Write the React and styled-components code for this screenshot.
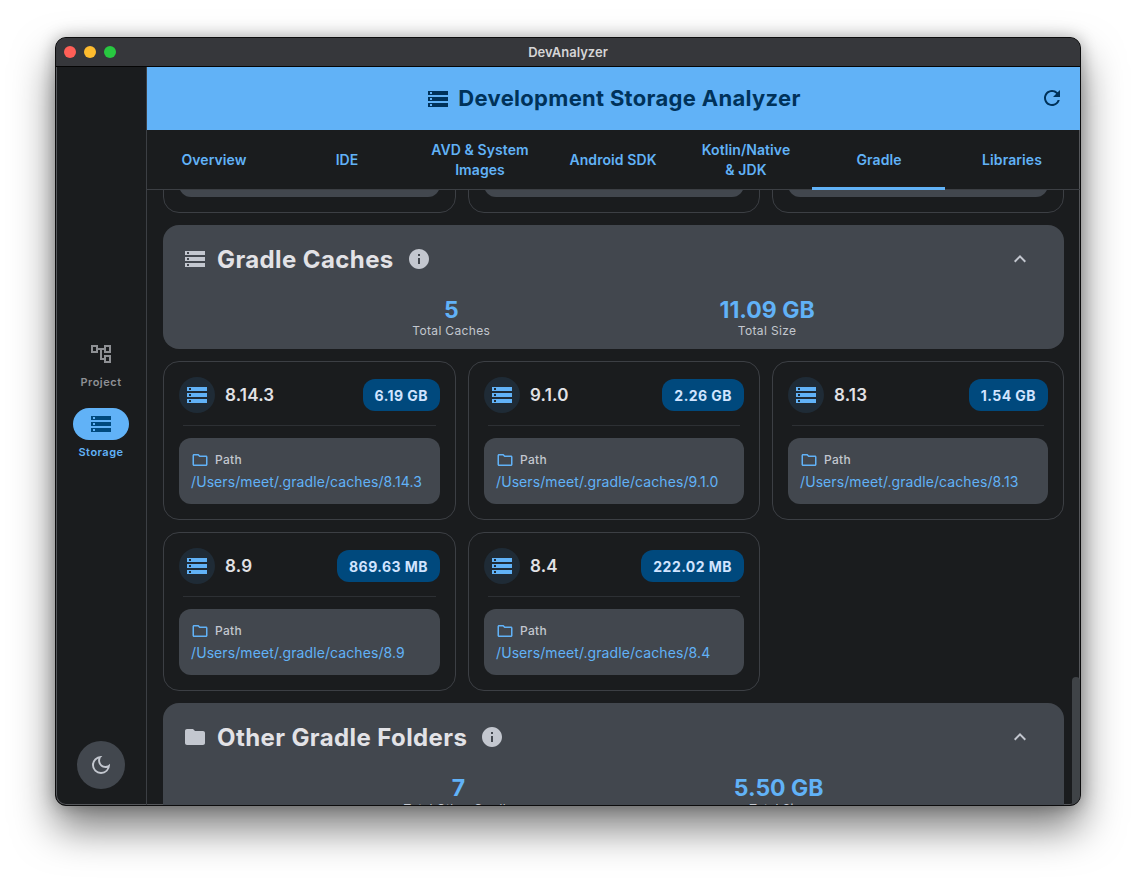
import React from 'react';
import styled, { createGlobalStyle } from 'styled-components';
import { MdStorage, MdFolder, MdInfo, MdExpandLess, MdRefresh, MdOutlineFolder, MdOutlineDarkMode, MdOutlineAccountTree } from 'react-icons/md';

const Global = createGlobalStyle`
  html, body { margin: 0; padding: 0; background: #fff; height: 880px; overflow: hidden; }
  * { box-sizing: border-box; }
  body { font-family: Inter, "Liberation Sans", sans-serif; }
`;

const BLUE = '#61b2f7';
const SURFACE = '#1a1c1e';
const VARIANT = '#42474e';
const LINE = '#3c3f44';

const Window = styled.div`
  margin: 37px 55px 0;
  width: 1026px;
  height: 769px;
  border-radius: 11px;
  background: ${SURFACE};
  border: 1px solid #0c0c0d;
  box-shadow: inset 0 0 0 1px #55575b, 0 22px 42px rgba(0, 0, 0, 0.52), 0 0 16px rgba(0, 0, 0, 0.28);
  display: flex;
  flex-direction: column;
  overflow: hidden;
`;
const TitleBar = styled.div`
  height: 29px;
  flex: none;
  background: #36373b;
  border-bottom: 1px solid #050505;
  display: flex;
  align-items: center;
  justify-content: center;
  position: relative;
  color: #d5d5d6;
  font-size: 13px;
  font-weight: 600;
`;
const Lights = styled.div`
  position: absolute;
  left: 8px;
  top: 8px;
  display: flex;
  gap: 8px;
`;
const Light = styled.span`
  width: 12px;
  height: 12px;
  border-radius: 50%;
  background: ${(p) => p.$c};
`;
const Body = styled.div`
  flex: 1;
  min-height: 0;
  display: flex;
`;
const Rail = styled.nav`
  width: 91px;
  flex: none;
  border-right: 1px solid ${LINE};
  display: flex;
  flex-direction: column;
  align-items: center;
  padding: 0 0 16px;
`;
const RailItems = styled.div`
  flex: 1;
  display: flex;
  flex-direction: column;
  align-items: center;
  justify-content: center;
  gap: 18px;
  padding-bottom: 10px;
`;
const RailItem = styled.div`
  display: flex;
  flex-direction: column;
  align-items: center;
  gap: 4px;
  font-size: 11px;
  font-weight: 600;
  letter-spacing: 0.5px;
  line-height: 16px;
  color: ${(p) => (p.$active ? BLUE : '#8e9094')};
`;
const Pill = styled.div`
  width: 56px;
  height: 32px;
  border-radius: 16px;
  display: flex;
  align-items: center;
  justify-content: center;
  font-size: 24px;
  background: ${(p) => (p.$active ? BLUE : 'transparent')};
  color: ${(p) => (p.$active ? '#00497d' : '#8e9094')};
`;
const ThemeButton = styled.div`
  width: 48px;
  height: 48px;
  border-radius: 50%;
  background: ${VARIANT};
  color: #c3c7cf;
  font-size: 24px;
  display: flex;
  align-items: center;
  justify-content: center;
`;
const Main = styled.main`
  flex: 1;
  min-width: 0;
  display: flex;
  flex-direction: column;
`;
const Header = styled.header`
  height: 63px;
  flex: none;
  background: ${BLUE};
  color: #00325a;
  display: flex;
  align-items: center;
  justify-content: center;
  gap: 8px;
  position: relative;
`;
const HeaderTitle = styled.h1`
  margin: 0 0 2px;
  font-size: 22px;
  font-weight: 700;
  letter-spacing: 0.3px;
`;
const HeaderIcon = styled.span`
  font-size: 24px;
  display: flex;
`;
const RefreshButton = styled.span`
  position: absolute;
  right: 16px;
  top: 19px;
  font-size: 24px;
  display: flex;
`;
const Tabs = styled.div`
  height: 60px;
  flex: none;
  display: grid;
  grid-template-columns: repeat(7, 133px);
  border-bottom: 1px solid ${LINE};
`;
const Tab = styled.div`
  display: flex;
  align-items: center;
  justify-content: center;
  text-align: center;
  color: ${BLUE};
  font-size: 14px;
  font-weight: 600;
  line-height: 20px;
  letter-spacing: 0.08px;
  padding: 3px 0 0 1px;
  border-bottom: 3px solid ${(p) => (p.$active ? BLUE : 'transparent')};
  margin-bottom: -1px;
`;
const Scroll = styled.div`
  flex: 1;
  min-height: 0;
  overflow: hidden;
  position: relative;
`;
const Content = styled.div`
  margin-top: -136px;
  padding: 0 16px;
  display: flex;
  flex-direction: column;
  gap: 12px;
`;
const Thumb = styled.div`
  position: absolute;
  right: 0;
  bottom: 0;
  width: 8px;
  height: 128px;
  border-radius: 4px 4px 0 0;
  background: #3f4347;
`;
const Grid = styled.div`
  display: grid;
  grid-template-columns: 293px 292px 292px;
  gap: 12px;
`;
const Card = styled.div`
  border: 1px solid ${LINE};
  border-radius: 16px;
  padding: 15px;
  height: 159px;
  display: flex;
  flex-direction: column;
`;
const CardTop = styled.div`
  display: flex;
  align-items: center;
  height: 36px;
`;
const Round = styled.div`
  width: 36px;
  height: 36px;
  border-radius: 50%;
  background: #1f2b36;
  color: ${BLUE};
  font-size: 24px;
  display: flex;
  align-items: center;
  justify-content: center;
`;
const Version = styled.div`
  margin-left: 10px;
  flex: 1;
  color: #e2e2e6;
  font-size: 17px;
  font-weight: 600;
  letter-spacing: 0.2px;
`;
const Badge = styled.div`
  height: 32px;
  padding: 0 12px;
  border-radius: 12px;
  background: #00497d;
  color: #d1e4ff;
  font-size: 14px;
  font-weight: 700;
  letter-spacing: 0.45px;
  display: flex;
  align-items: center;
`;
const Divider = styled.div`
  height: 1px;
  background: #2d3034;
  margin: 12px 4px;
`;
const PathBox = styled.div`
  background: ${VARIANT};
  border-radius: 12px;
  height: 66px;
  padding: 12px;
  display: flex;
  flex-direction: column;
  gap: 3px;
`;
const PathLabel = styled.div`
  display: flex;
  align-items: center;
  gap: 6px;
  height: 20px;
  color: #c3c7cf;
  font-size: 12px;
  font-weight: 500;
  letter-spacing: 0.3px;
`;
const PathIcon = styled.span`
  font-size: 18px;
  display: flex;
  color: ${BLUE};
`;
const PathValue = styled.div`
  color: ${BLUE};
  font-size: 14px;
  line-height: 20px;
  white-space: nowrap;
  letter-spacing: 0.09px;
`;
const Section = styled.section`
  background: ${VARIANT};
  border-radius: 16px;
  height: 124px;
  padding: 10px 20px 0;
  flex: none;
`;
const SectionTop = styled.div`
  display: flex;
  align-items: center;
  height: 48px;
`;
const SectionIcon = styled.span`
  font-size: 24px;
  display: flex;
  color: #c3c7cf;
`;
const SectionTitle = styled.h2`
  margin: 0 0 0 10px;
  color: #e2e2e6;
  font-size: 24px;
  font-weight: 700;
  letter-spacing: 0.4px;
`;
const InfoIcon = styled.span`
  margin-left: 13px;
  font-size: 24px;
  display: flex;
  color: #c3c7cf;
`;
const Collapse = styled.span`
  margin-left: auto;
  width: 48px;
  height: 48px;
  font-size: 24px;
  color: #c3c7cf;
  display: flex;
  align-items: center;
  justify-content: center;
`;
const Stats = styled.div`
  display: flex;
  justify-content: space-evenly;
  margin-top: 13px;
`;
const Stat = styled.div`
  display: flex;
  flex-direction: column;
  align-items: center;
`;
const StatValue = styled.div`
  color: ${BLUE};
  font-size: 23px;
  font-weight: 700;
  line-height: 28px;
`;
const StatLabel = styled.div`
  color: #c3c7cf;
  font-size: 12px;
  line-height: 16px;
  margin-top: -1px;
  letter-spacing: 0.35px;
`;

const caches = [
  ['8.14.3', '6.19 GB'],
  ['9.1.0', '2.26 GB'],
  ['8.13', '1.54 GB'],
  ['8.9', '869.63 MB'],
  ['8.4', '222.02 MB'],
];

function CacheCard({ name, size, path }) {
  return (
    <Card>
      <CardTop>
        <Round><MdStorage /></Round>
        <Version>{name}</Version>
        <Badge>{size}</Badge>
      </CardTop>
      <Divider />
      <PathBox>
        <PathLabel><PathIcon><MdOutlineFolder /></PathIcon>Path</PathLabel>
        <PathValue>{path}</PathValue>
      </PathBox>
    </Card>
  );
}

function ScrolledCard() {
  return (
    <Card>
      <CardTop />
      <Divider />
      <PathBox />
    </Card>
  );
}

function SectionCard({ icon, title, stats }) {
  return (
    <Section>
      <SectionTop>
        <SectionIcon>{icon}</SectionIcon>
        <SectionTitle>{title}</SectionTitle>
        <InfoIcon><MdInfo /></InfoIcon>
        <Collapse><MdExpandLess /></Collapse>
      </SectionTop>
      <Stats>
        {stats.map(([v, l]) => (
          <Stat key={l}><StatValue>{v}</StatValue><StatLabel>{l}</StatLabel></Stat>
        ))}
      </Stats>
    </Section>
  );
}

export default function App() {
  return (
    <>
      <Global />
      <Window>
        <TitleBar>
          <Lights>
            <Light $c="#ff5f57" /><Light $c="#febc2e" /><Light $c="#28c840" />
          </Lights>
          DevAnalyzer
        </TitleBar>
        <Body>
          <Rail>
            <RailItems>
              <RailItem><Pill><MdOutlineAccountTree /></Pill>Project</RailItem>
              <RailItem $active><Pill $active><MdStorage /></Pill>Storage</RailItem>
            </RailItems>
            <ThemeButton><MdOutlineDarkMode /></ThemeButton>
          </Rail>
          <Main>
            <Header>
              <HeaderIcon><MdStorage /></HeaderIcon>
              <HeaderTitle>Development Storage Analyzer</HeaderTitle>
              <RefreshButton><MdRefresh /></RefreshButton>
            </Header>
            <Tabs>
              <Tab>Overview</Tab>
              <Tab>IDE</Tab>
              <Tab>AVD &amp; System<br />Images</Tab>
              <Tab>Android SDK</Tab>
              <Tab>Kotlin/Native<br />&amp; JDK</Tab>
              <Tab $active>Gradle</Tab>
              <Tab>Libraries</Tab>
            </Tabs>
            <Scroll>
              <Content>
                <Grid>
                  <ScrolledCard />
                  <ScrolledCard />
                  <ScrolledCard />
                </Grid>
                <SectionCard icon={<MdStorage />} title="Gradle Caches" stats={[['5', 'Total Caches'], ['11.09 GB', 'Total Size']]} />
                <Grid>
                  {caches.map(([n, s]) => (
                    <CacheCard key={n} name={n} size={s} path={`/Users/meet/.gradle/caches/${n}`} />
                  ))}
                </Grid>
                <SectionCard icon={<MdFolder />} title="Other Gradle Folders" stats={[['7', 'Total Other Gradle'], ['5.50 GB', 'Total Size']]} />
              </Content>
              <Thumb />
            </Scroll>
          </Main>
        </Body>
      </Window>
    </>
  );
}
